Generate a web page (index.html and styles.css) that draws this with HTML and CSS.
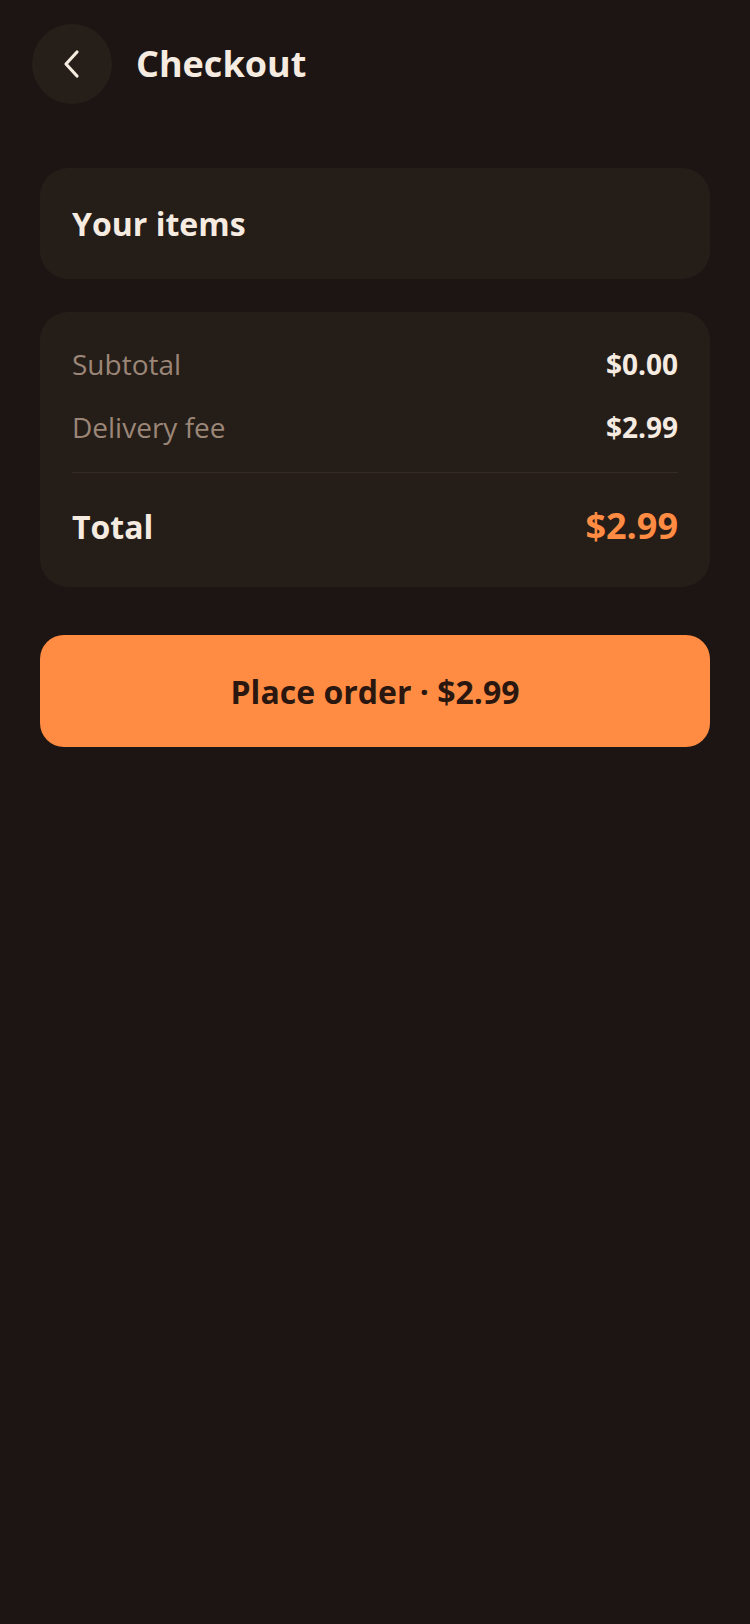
FILE: index.html
```html
<!DOCTYPE html>
<html lang="en">
<head>
    <meta charset="UTF-8">
    <meta name="viewport" content="width=device-width, initial-scale=1.0">
    <title>Checkout</title>
    <link rel="stylesheet" href="styles.css">
</head>
<body>
    <div class="header">
        <button class="back">
            <svg width="20" height="30" viewBox="0 0 20 30">
                <path d="M15 3 L4 15 L15 27" fill="none" stroke="#f5ebe0" stroke-width="3.2" stroke-linecap="round" stroke-linejoin="round"/>
            </svg>
        </button>
        <h1>Checkout</h1>
    </div>
    <div class="content">
        <div class="card items">
            <h2>Your items</h2>
        </div>
        <div class="card summary">
            <div class="row">
                <span class="label">Subtotal</span>
                <span class="value">$0.00</span>
            </div>
            <div class="row">
                <span class="label">Delivery fee</span>
                <span class="value">$2.99</span>
            </div>
            <div class="row total">
                <span class="total-label">Total</span>
                <span class="total-value">$2.99</span>
            </div>
        </div>
        <button class="order">Place order &middot; $2.99</button>
    </div>
</body>
</html>
```

FILE: styles.css
```css
body {
    margin: 0;
    background: #1d1513;
    color: #f5ebe0;
    font-family: "Open Sans", "Noto Sans", sans-serif;
    min-height: 1624px;
}
.header {
    display: flex;
    align-items: center;
    gap: 24px;
    padding: 24px 32px 0;
}
.back {
    width: 80px;
    height: 80px;
    border-radius: 50%;
    border: none;
    background: #261e19;
    display: flex;
    align-items: center;
    justify-content: center;
    padding: 0;
}
.header h1 {
    margin: 0;
    font-size: 36px;
    font-weight: 700;
    line-height: 48px;
}
.content {
    display: flex;
    flex-direction: column;
    padding: 64px 40px 0;
}
.card {
    background: #251d18;
    border-radius: 28px;
    padding: 32px;
}
.items h2 {
    margin: 0;
    font-size: 32px;
    font-weight: 700;
    line-height: 47px;
}
.summary {
    margin-top: 33px;
    display: flex;
    flex-direction: column;
    gap: 23px;
}
.row {
    display: flex;
    justify-content: space-between;
    align-items: baseline;
    line-height: 40px;
}
.label {
    font-size: 28px;
    color: #9b8677;
}
.value {
    font-size: 28px;
    font-weight: 700;
}
.total {
    border-top: 1px solid #352b25;
    margin-top: 2px;
    padding-top: 25px;
    line-height: 56px;
}
.total-label {
    font-size: 32px;
    font-weight: 700;
}
.total-value {
    font-size: 36px;
    font-weight: 700;
    color: #ff8c42;
}
.order {
    margin-top: 48px;
    height: 112px;
    border: none;
    border-radius: 24px;
    background: #ff8c42;
    color: #2a1710;
    font-family: inherit;
    font-size: 32px;
    font-weight: 700;
}
```
